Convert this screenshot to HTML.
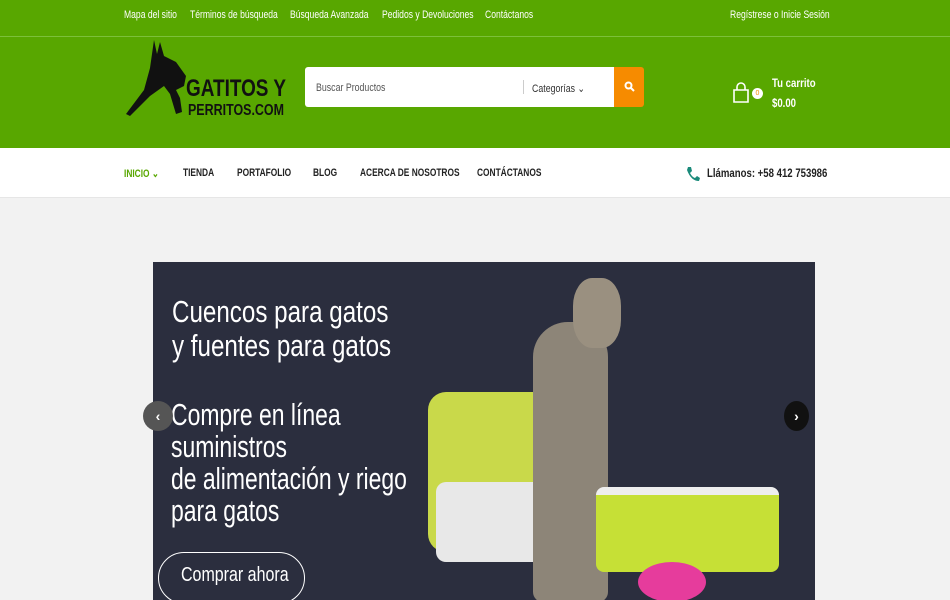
<!DOCTYPE html>
<html><head><meta charset="utf-8"><style>
*{margin:0;padding:0;box-sizing:border-box}
body{width:950px;height:600px;overflow:hidden;background:#f2f2f2;font-family:"Liberation Sans",sans-serif;position:relative}
span{white-space:nowrap;display:inline-block;transform:scaleX(.8);transform-origin:left}
.top{position:absolute;left:0;top:0;width:950px;height:148px;background:#58a700}
.tl{position:absolute;top:9px;font-size:11px;color:#fff;transform:scaleX(.78)}
.line{position:absolute;top:36px;left:0;width:950px;height:1px;background:#7cc03a}
.nav{position:absolute;top:148px;left:0;width:950px;height:50px;background:#fff;border-bottom:1px solid #e6e6e6}
.ni{position:absolute;top:167px;font-size:11px;color:#222;font-weight:bold;transform:scaleX(.76)}
.slide{position:absolute;left:153px;top:262px;width:662px;height:338px;background:#2b2e3e;overflow:hidden}
.h{position:absolute;color:#fff;font-size:31px;line-height:34px;transform:scaleX(.78);transform-origin:left;white-space:nowrap}
</style></head><body>
<div class="top">
<span class="tl" style="left:124px">Mapa del sitio</span>
<span class="tl" style="left:190px">Términos de búsqueda</span>
<span class="tl" style="left:290px">Búsqueda Avanzada</span>
<span class="tl" style="left:382px">Pedidos y Devoluciones</span>
<span class="tl" style="left:485px">Contáctanos</span>
<span class="tl" style="left:730px">Regístrese o Inicie Sesión</span>
<div class="line"></div>
<svg style="position:absolute;left:124px;top:38px" width="170" height="80">
<path d="M30 2 L33 16 L36 4 L40 18 L52 24 L62 38 L60 48 L52 52 L56 60 L58 74 L52 76 L46 56 L40 48 L26 58 L6 78 L2 76 L20 52 L26 30 Z" fill="#111"/>
<text x="62" y="58" font-family="Liberation Sans,sans-serif" font-weight="bold" font-size="24" fill="#111" textLength="100" lengthAdjust="spacingAndGlyphs">GATITOS Y</text>
<text x="64" y="77" font-family="Liberation Sans,sans-serif" font-weight="bold" font-size="16" fill="#111" textLength="96" lengthAdjust="spacingAndGlyphs">PERRITOS.COM</text>
</svg>
<div style="position:absolute;left:305px;top:67px;width:309px;height:40px;background:#fff;border-radius:3px 0 0 3px"></div>
<span style="position:absolute;left:316px;top:82px;font-size:11px;color:#555">Buscar Productos</span>
<div style="position:absolute;left:523px;top:80px;width:1px;height:14px;background:#ccc"></div>
<span style="position:absolute;left:532px;top:82px;font-size:11px;color:#333">Categorías ⌄</span>
<div style="position:absolute;left:614px;top:67px;width:30px;height:40px;background:#f68b00;border-radius:0 3px 3px 0"></div>
<svg style="position:absolute;left:624px;top:81px" width="11" height="11"><circle cx="4.5" cy="4.5" r="3" stroke="#fff" stroke-width="2" fill="none"/><path d="M7 7 L10 10" stroke="#fff" stroke-width="2"/></svg>
<svg style="position:absolute;left:732px;top:82px" width="18" height="21"><path d="M2 8 H16 V20 H2 Z" fill="none" stroke="#fff" stroke-width="1.6"/><path d="M5 8 V5 A4 4 0 0 1 13 5 V8" fill="none" stroke="#fff" stroke-width="1.6"/></svg>
<div style="position:absolute;left:752px;top:88px;width:11px;height:11px;border-radius:50%;background:#fff;color:#f68b00;font-size:7px;text-align:center;line-height:11px">0</div>
<span style="position:absolute;left:772px;top:76px;font-size:12px;color:#fff;font-weight:bold">Tu carrito</span>
<span style="position:absolute;left:772px;top:96px;font-size:12px;color:#fff;font-weight:bold">$0.00</span>
</div>
<div class="nav"></div>
<span class="ni" style="left:124px;color:#58a700">INICIO ⌄</span>
<span class="ni" style="left:183px">TIENDA</span>
<span class="ni" style="left:237px">PORTAFOLIO</span>
<span class="ni" style="left:313px">BLOG</span>
<span class="ni" style="left:360px">ACERCA DE NOSOTROS</span>
<span class="ni" style="left:477px">CONTÁCTANOS</span>
<svg style="position:absolute;left:686px;top:166px" width="14" height="16"><path d="M2 1 L5 1 L6 5 L4 7 Q6 11 9 12 L11 10 L14 12 L13 15 Q5 15 1 4 Z" fill="#1a8a7a"/></svg>
<span class="ni" style="left:707px;font-size:12px;top:166px;transform:scaleX(.8)">Llámanos: +58 412 753986</span>
<div class="slide">
<div class="h" style="left:19px;top:33px">Cuencos para gatos<br>y fuentes para gatos</div>
<div class="h" style="left:18px;top:137px;line-height:32px;transform:scaleX(.74)">Compre en línea<br>suministros<br>de alimentación y riego<br>para gatos</div>
<div style="position:absolute;left:5px;top:290px;width:147px;height:52px;border:1px solid #fff;border-radius:26px"></div>
<span style="position:absolute;left:28px;top:302px;color:#fff;font-size:20px">Comprar ahora</span>
<div style="position:absolute;left:275px;top:130px;width:130px;height:160px;background:#c9d94a;border-radius:18px"></div>
<div style="position:absolute;left:283px;top:220px;width:110px;height:80px;background:#e8e8e8;border-radius:10px"></div>
<div style="position:absolute;left:380px;top:60px;width:75px;height:280px;background:#8d8578;border-radius:35px 35px 10px 10px"></div>
<div style="position:absolute;left:420px;top:16px;width:48px;height:70px;background:#9a9080;border-radius:40%"></div>
<div style="position:absolute;left:443px;top:225px;width:183px;height:85px;background:#c6e036;border-radius:8px;border-top:8px solid #eee"></div>
<div style="position:absolute;left:485px;top:300px;width:68px;height:40px;background:#e63c9c;border-radius:50%"></div>
</div>
<div style="position:absolute;left:143px;top:401px;width:30px;height:30px;border-radius:50%;background:#555;color:#fff;text-align:center;line-height:30px;font-size:14px;font-weight:bold">‹</div>
<div style="position:absolute;left:784px;top:401px;width:25px;height:30px;border-radius:50%;background:#111;color:#fff;text-align:center;line-height:30px;font-size:14px;font-weight:bold">›</div>
</body></html>
